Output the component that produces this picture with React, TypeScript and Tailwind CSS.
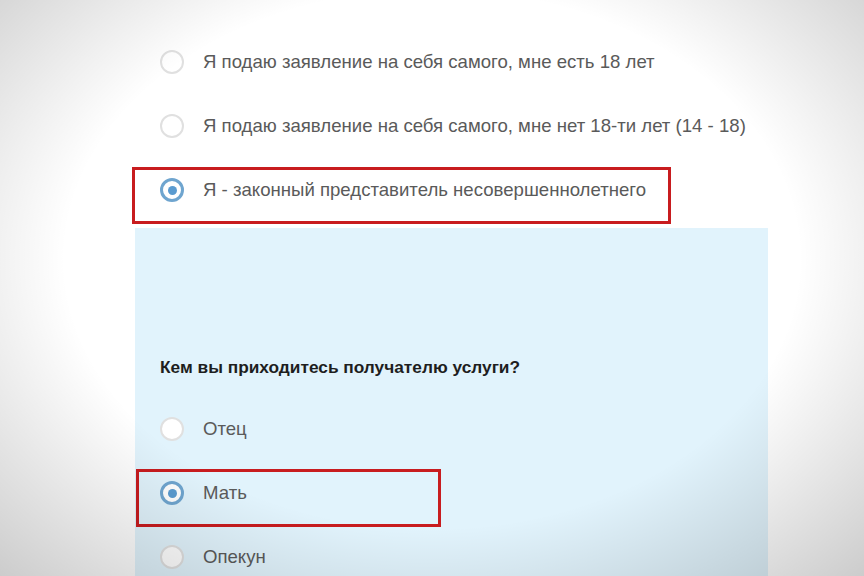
import React from 'react';

function Radio({ checked }: { checked?: boolean }) {
  if (checked) {
    return (
      <span className="w-[24px] h-[24px] rounded-full border-[3px] border-[#6fa5cf] bg-white flex items-center justify-center shrink-0">
        <span className="w-[9px] h-[9px] rounded-full bg-[#5a9bd0]" />
      </span>
    );
  }
  return <span className="w-[24px] h-[24px] rounded-full border-2 border-[#e0e0e0] bg-white shrink-0" />;
}

function Option({ label, checked, box }: { label: string; checked?: boolean; box?: string }) {
  return (
    <div className="relative h-[64px] flex items-center pl-[25px] gap-[19px]">
      <Radio checked={checked} />
      <span className="text-[18.6px] text-[#5a5a5a] whitespace-nowrap">{label}</span>
      {box && <div className={`absolute border-[3px] border-[#c81c1f] ${box}`} />}
    </div>
  );
}

export default function App() {
  return (
    <div
      className="relative w-[864px] h-[576px] overflow-hidden bg-white"
      style={{ fontFamily: '"Liberation Sans", Arial, sans-serif' }}
    >
      <div className="ml-[135px] w-[633px] pt-[30px] flex flex-col">
        <Option label="Я подаю заявление на себя самого, мне есть 18 лет" />
        <Option label="Я подаю заявление на себя самого, мне нет 18-ти лет (14 - 18)" />
        <Option
          label="Я - законный представитель несовершеннолетнего"
          checked
          box="left-[-3px] top-[9px] w-[539px] h-[57px]"
        />
        <div className="h-[6px]" />
        <div className="bg-[#e1f3fc] pt-[128px] pb-[40px] flex flex-col">
          <h3 className="pl-[25px] text-[17.3px] font-bold text-[#1e1e1e] leading-[22px] mb-[19px]">
            Кем вы приходитесь получателю услуги?
          </h3>
          <Option label="Отец" />
          <Option label="Мать" checked box="left-[1px] top-[8px] w-[305px] h-[58px]" />
          <Option label="Опекун" />
        </div>
      </div>
      <div className="pointer-events-none absolute inset-0 bg-[radial-gradient(ellipse_at_50%_45%,transparent_60%,rgba(0,0,0,0.2)_100%)]" />
    </div>
  );
}
